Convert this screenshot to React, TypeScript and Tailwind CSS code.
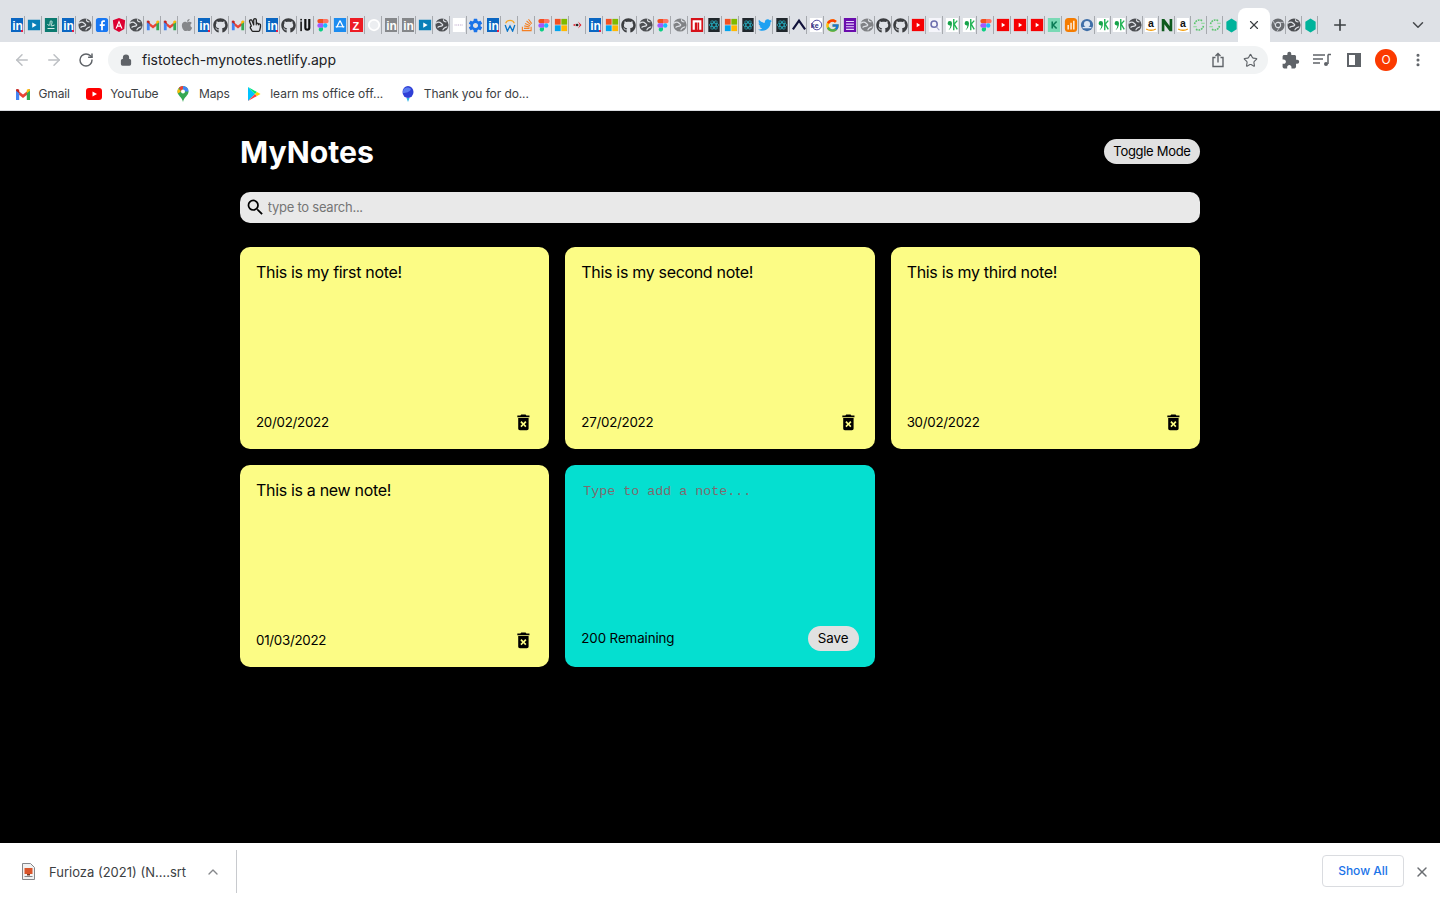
import React from "react";
import { ArrowLeft, ArrowRight, RotateCw, Plus, ChevronDown, ChevronUp, X, Star, Lock, MoreVertical } from "lucide-react";
import { MdDeleteForever, MdSearch, MdSettings, MdExtension } from "react-icons/md";
import { FaApple, FaGithub, FaTwitter, FaStackOverflow, FaRegHandPeace } from "react-icons/fa";
import { FcGoogle } from "react-icons/fc";

// favicons, left to right, as they sit in the tab strip
const narrowTabs = [
  "li", "play", "wave", "li", "globe", "fb", "ng", "globe", "gmail", "gmail", "apple", "li", "gh", "gmail", "peace", "li",
  "gh", "iu", "figma", "appstore", "z", "circle", "liGrey", "liGrey", "play", "globe", "blank", "gear", "li", "work", "so",
  "figma", "ms", "dots", "li", "ms", "gh", "globe", "figma", "globeGrey", "t", "react", "ms", "react", "tw", "react", "caret",
  "ke", "g", "form", "globeGrey", "gh", "gh", "yt", "q", "nine", "nine", "figma", "yt", "yt", "yt", "k", "bars",
];
const narrowerTabs = ["seal", "nine", "nine", "globe", "amazon", "n", "amazon", "ring", "ring", "hex"];
const afterTabs = ["chrome", "globe", "hex"];

const notes = [
  { text: "This is my first note!", date: "20/02/2022" },
  { text: "This is my second note!", date: "27/02/2022" },
  { text: "This is my third note!", date: "30/02/2022" },
  { text: "This is a new note!", date: "01/03/2022" },
];

const Svg = ({ children, w = 14, h = 14 }: { children: React.ReactNode; w?: number; h?: number }) => (
  <svg width={w} height={h} viewBox="0 0 16 16" className="shrink-0">
    {children}
  </svg>
);

const Gmail = ({ size = 14 }: { size?: number }) => (
  <Svg w={size} h={size}>
    <path d="M1 3l7 5.500L15 3v3.500L8 12 1 6.500z" fill="#ea4335" />
    <path d="M1 3.500V14h3.200V6.500z" fill="#4285f4" />
    <path d="M15 3.500V14h-3.200V6.500z" fill="#34a853" />
    <path d="M11.800 3.800v3.400L15 4.800C15 3 13.500 2.300 11.800 3.800z" fill="#fbbc04" />
    <path d="M1 4.800v0L4.200 7.200V3.800C2.500 2.300 1 3 1 4.800z" fill="#c5221f" />
  </Svg>
);

const Youtube = ({ w = 14, h = 14 }: { w?: number; h?: number }) => (
  <Svg w={w} h={h}>
    <rect x="0" y="2" width="16" height="12" rx="3" fill="#ff0000" />
    <path d="M6.500 5.500v5L11 8z" fill="#fff" />
  </Svg>
);

const Figma = () => (
  <Svg>
    <path d="M4 1h4v5H4a2.500 2.500 0 0 1 0-5z" fill="#f24e1e" />
    <path d="M8 1h4a2.500 2.500 0 0 1 0 5H8z" fill="#ff7262" />
    <path d="M4 6h4v5H4a2.500 2.500 0 0 1 0-5z" fill="#a259ff" />
    <circle cx="10.500" cy="8.500" r="2.500" fill="#1abcfe" />
    <path d="M4 11h4v2.500a2.500 2.500 0 1 1-4-2.500z" fill="#0acf83" />
  </Svg>
);

const LinkedIn = ({ grey }: { grey?: boolean }) => (
  <svg width="12" height="14" viewBox="0 0 12 14" className="shrink-0">
    <rect width="12" height="14" fill={grey ? "#85878a" : "#0a66c2"} />
    <text x="1.200" y="12" fontSize="12" fontWeight="700" fill="#fff" fontFamily="Liberation Sans, sans-serif">
      in
    </text>
    {!grey && <rect x="10" y="12" width="2" height="2" fill="#e11d48" />}
  </svg>
);

const Globe = ({ color = "#4d4f53" }: { color?: string }) => (
  <Svg>
    <circle cx="8" cy="8" r="7.500" fill={color} />
    <path d="M1 6c3-2 5-1 6 0s3 2 1 3-4 0-5 2M10 1.500c-1 2 1 3 3 3M9 14c0-2 2-3 5-4" stroke="#dee1e6" strokeWidth="1.400" fill="none" />
  </Svg>
);

const Ms = () => (
  <Svg>
    <rect x="1" y="1" width="6.600" height="6.600" fill="#f25022" />
    <rect x="8.400" y="1" width="6.600" height="6.600" fill="#7fba00" />
    <rect x="1" y="8.400" width="6.600" height="6.600" fill="#00a4ef" />
    <rect x="8.400" y="8.400" width="6.600" height="6.600" fill="#ffb900" />
  </Svg>
);

const ReactIcon = () => (
  <Svg>
    <rect x="1.500" width="13" height="16" fill="#20272c" />
    <g stroke="#25b6c9" strokeWidth="0.800" fill="none">
      <ellipse cx="8" cy="8" rx="5.500" ry="2.200" />
      <ellipse cx="8" cy="8" rx="5.500" ry="2.200" transform="rotate(60 8 8)" />
      <ellipse cx="8" cy="8" rx="5.500" ry="2.200" transform="rotate(120 8 8)" />
    </g>
  </Svg>
);

const Nine = () => (
  <Svg>
    <rect x="1" width="14" height="16" fill="#fff" />
    <path d="M3 6a2.500 2.500 0 1 1 5 0c0 4-2 7-4 8 1.500-2 2-3.500 2.200-5.500A2.500 2.500 0 0 1 3 6z" fill="#16a34a" />
    <path d="M10 1v13M14 3l-3.500 4 3.500 6" stroke="#22b455" strokeWidth="1.600" fill="none" />
  </Svg>
);

const Amazon = () => (
  <Svg>
    <rect x="1" width="14" height="16" fill="#fff" />
    <text x="4.500" y="10.500" fontSize="12" fontWeight="700" fill="#111" fontFamily="Liberation Sans, sans-serif">
      a
    </text>
    <path d="M2.500 12.500c3 2 8 2 11 0" stroke="#f59e0b" strokeWidth="1.500" fill="none" />
  </Svg>
);

const Favicon = ({ kind }: { kind: string }) => {
  switch (kind) {
    case "li":
      return <LinkedIn />;
    case "liGrey":
      return <LinkedIn grey />;
    case "play":
      return (
        <Svg>
          <rect x="1" y="2" width="14" height="12" fill="#0a7fb8" />
          <path d="M6 5v6l5-3z" fill="#fff" />
        </Svg>
      );
    case "wave":
      return (
        <Svg>
          <rect x="1" y="0" width="14" height="16" fill="#0b7a70" />
          <path d="M4 7c2 3 3 1 3-2s3-2 2 1-2 4 3 2M4 12h8" stroke="#dff5ef" strokeWidth="1.100" fill="none" />
        </Svg>
      );
    case "globe":
      return <Globe />;
    case "globeGrey":
      return <Globe color="#808285" />;
    case "fb":
      return (
        <Svg>
          <rect x="1" y="0" width="14" height="16" rx="3" fill="#1877f2" />
          <path d="M9 14V9h2l.4-2H9V5.600c0-.8.3-1.100 1.100-1.100h1.200V2.600H9.600C7.700 2.600 7 3.700 7 5.300V7H5.400v2H7v5z" fill="#fff" />
        </Svg>
      );
    case "ng":
      return (
        <Svg>
          <path d="M8 0l7 2.500-1 10L8 16l-6-3.500-1-10z" fill="#dd0031" />
          <path d="M8 2.500L4 12h1.500l.8-2h3.400l.8 2H12zM6.900 8.500L8 5.700l1.100 2.800z" fill="#fff" />
        </Svg>
      );
    case "gmail":
      return <Gmail />;
    case "apple":
      return <FaApple size={14} color="#85878a" />;
    case "gh":
      return <FaGithub size={15} color="#3b3d40" />;
    case "peace":
      return <FaRegHandPeace size={14} color="#222" />;
    case "iu":
      return (
        <Svg>
          <rect x="1.500" y="4" width="1.800" height="11" fill="#111" />
          <rect x="1.500" y="1" width="1.800" height="1.800" fill="#111" />
          <path d="M6 1v10a3.500 3.500 0 0 0 7 0V1h-2.500v10a1 1 0 0 1-2 0V1z" fill="#111" />
        </Svg>
      );
    case "figma":
      return <Figma />;
    case "appstore":
      return (
        <Svg>
          <rect x="1" width="14" height="16" fill="#1c8cf0" />
          <path d="M8 3l-4 8M8 3l4 8M3 10h10" stroke="#fff" strokeWidth="1.300" />
        </Svg>
      );
    case "z":
      return (
        <svg width="13" height="14" viewBox="0 0 13 14" className="shrink-0">
          <rect width="13" height="14" fill="#ed1c24" />
          <text x="2.500" y="11.500" fontSize="11" fontWeight="700" fill="#fff" fontFamily="Liberation Sans, sans-serif">
            Z
          </text>
        </svg>
      );
    case "circle":
      return (
        <Svg>
          <circle cx="8" cy="8" r="6" fill="#eceef1" stroke="#fff" strokeWidth="2" />
        </Svg>
      );
    case "blank":
      return (
        <Svg>
          <rect x="1" width="14" height="16" fill="#fff" />
          <path d="M3 8h10" stroke="#a78bba" strokeDasharray="1 1" />
        </Svg>
      );
    case "gear":
      return <MdSettings size={17} color="#1a73e8" />;
    case "work":
      return (
        <Svg>
          <path d="M3 6a5.500 5.500 0 0 1 10 0" stroke="#f5a623" strokeWidth="1.300" fill="none" />
          <path d="M2.500 8l2.500 7 3-6 3 6 2.500-7" stroke="#0875c9" strokeWidth="1.500" fill="none" />
        </Svg>
      );
    case "so":
      return <FaStackOverflow size={14} color="#f48024" />;
    case "ms":
      return <Ms />;
    case "dots":
      return (
        <Svg>
          <path d="M2 8l3-1.500v3zM8 4l4 4-4 4 2-4z" fill="#e11d2a" />
          <circle cx="7" cy="8" r="1.500" fill="#222" />
        </Svg>
      );
    case "t":
      return (
        <Svg>
          <rect x="1" width="14" height="16" fill="#d6121a" />
          <path d="M3 2.500h10v11h-2.500V5h-2v8.500H8V5H5.500v8.500H3z" fill="#fff" />
        </Svg>
      );
    case "react":
      return <ReactIcon />;
    case "tw":
      return <FaTwitter size={14} color="#1da1f2" />;
    case "caret":
      return (
        <Svg>
          <path d="M1 13L8 3l7 10" stroke="#11123a" strokeWidth="2.500" fill="none" />
        </Svg>
      );
    case "ke":
      return (
        <Svg>
          <rect x="1" width="14" height="16" fill="#fff" />
          <circle cx="9" cy="8" r="5.500" stroke="#3a3592" fill="none" />
          <text x="2" y="11" fontSize="8" fontWeight="700" fill="#312e81" fontFamily="Liberation Sans, sans-serif">
            ke
          </text>
        </Svg>
      );
    case "g":
      return <FcGoogle size={15} />;
    case "form":
      return (
        <Svg>
          <rect x="1" width="14" height="16" fill="#6a0dad" />
          <path d="M3.500 4h9M3.500 7h9M3.500 10h9M3.500 13h9" stroke="#e9d5ff" strokeWidth="1.200" />
        </Svg>
      );
    case "yt":
      return (
        <Svg>
          <rect x="1" y="1" width="14" height="14" fill="#f60002" />
          <path d="M6.500 5.500v5l4-2.500z" fill="#fff" />
        </Svg>
      );
    case "q":
      return (
        <Svg>
          <rect x="1" width="14" height="16" fill="#f5f5fb" />
          <circle cx="7" cy="7" r="3.500" stroke="#6d6fae" strokeWidth="1.800" fill="none" />
          <path d="M9.500 10l3.500 4" stroke="#9da0c9" strokeWidth="1.300" />
        </Svg>
      );
    case "nine":
      return <Nine />;
    case "k":
      return (
        <Svg>
          <rect x="1" width="14" height="16" fill="#7ad9b5" />
          <path d="M6 4v8M11 4L7 8l4 4" stroke="#0a7a55" strokeWidth="1.800" fill="none" />
        </Svg>
      );
    case "bars":
      return (
        <Svg>
          <rect x="1" width="14" height="16" rx="4" fill="#f57c00" />
          <path d="M4 8v5h1.500V8zM7.300 5.500V13h1.500V5.500zM10.500 3v10H12V3z" fill="#fff" />
        </Svg>
      );
    case "seal":
      return (
        <Svg>
          <circle cx="8" cy="8" r="7" fill="#3f6fa8" />
          <circle cx="8" cy="7" r="3.500" fill="#dbe6f2" />
          <path d="M3 11h10" stroke="#dbe6f2" strokeWidth="1.500" />
        </Svg>
      );
    case "amazon":
      return <Amazon />;
    case "n":
      return (
        <Svg>
          <path d="M2 15V1h3l6 8V1h3v14h-3L5 7v8z" fill="#0e5a1d" />
        </Svg>
      );
    case "ring":
      return (
        <Svg>
          <path d="M3 7a5.500 5.500 0 0 1 9-3.500M13 9a5.500 5.500 0 0 1-9 3.500" fill="none" stroke="#5cc46e" strokeWidth="1.800" strokeDasharray="2 1" />
          <path d="M10.500 6h4M1.500 10h4" stroke="#86d993" strokeWidth="1.200" />
        </Svg>
      );
    case "hex":
      return (
        <Svg w={15} h={15}>
          <path d="M8 .5l5.500 3.500v8L8 15.500 2.500 12V4z" fill="#00b39b" />
        </Svg>
      );
    case "chrome":
      return (
        <Svg>
          <circle cx="8" cy="8" r="7.500" fill="#6a6d71" />
          <path d="M8 5h6.500M5.500 9.500L2.500 3.500M10.500 9.500L7 15" stroke="#dee1e6" strokeWidth="0.800" />
          <circle cx="8" cy="8" r="3" fill="#5f6368" stroke="#dee1e6" strokeWidth="1.200" />
        </Svg>
      );
    default:
      return null;
  }
};

const Tab = ({ kind, wide }: { kind: string; wide?: boolean }) => (
  <div className={`relative flex h-full items-center justify-center ${wide ? "w-[17px]" : "w-[16px]"}`}>
    <Favicon kind={kind} />
    <span className="absolute right-0 top-[8px] h-[18px] w-px bg-[#a6a9ae]" />
  </div>
);

const TabStrip = () => (
  <div className="flex h-[42px] shrink-0 items-end bg-[#dee1e6] pl-[8px]">
    <div className="flex h-[34px] items-stretch">
      {narrowTabs.map((kind, i) => (
        <Tab key={i} kind={kind} wide />
      ))}
      {narrowerTabs.map((kind, i) => (
        <Tab key={i} kind={kind} />
      ))}
      <div className="relative z-10 ml-[-1px] flex w-[32px] items-center justify-center rounded-t-[8px] bg-white">
        <X size={14} strokeWidth={2} className="text-[#3c4043]" />
      </div>
      {afterTabs.map((kind, i) => (
        <Tab key={i} kind={kind} />
      ))}
      <div className="ml-[12px] flex w-[20px] items-center justify-center">
        <Plus size={18} strokeWidth={2.2} className="text-[#3c4043]" />
      </div>
    </div>
    <div className="flex h-[34px] flex-1 items-center justify-end pr-[13px]">
      <ChevronDown size={18} strokeWidth={2} className="text-[#45484c]" />
    </div>
  </div>
);

const ToolButton = ({ children }: { children: React.ReactNode }) => (
  <div className="flex h-[32px] w-[32px] items-center justify-center text-[#5f6368]">{children}</div>
);

const Toolbar = () => (
  <div className="flex h-[36px] shrink-0 items-center bg-white pl-[6px] pr-[6px]">
    <ToolButton>
      <ArrowLeft size={18} strokeWidth={2} className="text-[#bdc0c4]" />
    </ToolButton>
    <ToolButton>
      <ArrowRight size={18} strokeWidth={2} className="text-[#bdc0c4]" />
    </ToolButton>
    <ToolButton>
      <RotateCw size={16} strokeWidth={2.2} />
    </ToolButton>
    <div className="ml-[6px] mr-[6px] flex h-[28px] flex-1 items-center rounded-full bg-[#f1f3f4] pl-[12px] pr-[8px]">
      <Lock size={12} strokeWidth={2.5} className="fill-[#5f6368] text-[#5f6368]" />
      <span className="ml-[10px] mt-[-1px] flex-1 text-[14px] text-[#202124]">fistotech-mynotes.netlify.app</span>
      <div className="flex items-center gap-[12px] text-[#5f6368]">
        <svg width="20" height="20" viewBox="0 0 20 20" fill="none" stroke="currentColor" strokeWidth="1.400">
          <path d="M7.500 7.500H5v9h10v-9h-2.500M10 12.500V3.500M7.500 6L10 3.500 12.500 6" />
        </svg>
        <div className="flex w-[20px] justify-center">
          <Star size={15} strokeWidth={1.8} />
        </div>
      </div>
    </div>
    <ToolButton>
      <MdExtension size={19} />
    </ToolButton>
    <ToolButton>
      <svg width="18" height="14" viewBox="0 0 18 14" fill="none" stroke="#5f6368" strokeWidth="1.500">
        <path d="M0 2h12M0 6h10M0 10h7M15 1.500V11M15 1.500h3" />
        <circle cx="13" cy="11" r="2" fill="#5f6368" stroke="none" />
      </svg>
    </ToolButton>
    <ToolButton>
      <div className="flex h-[14px] w-[14px] justify-end border-2 border-[#5f6368]">
        <div className="h-full w-[4px] bg-[#5f6368]" />
      </div>
    </ToolButton>
    <ToolButton>
      <div className="flex h-[22px] w-[22px] items-center justify-center rounded-full bg-[#fb3a00] text-[12px] text-white">O</div>
    </ToolButton>
    <ToolButton>
      <MoreVertical size={16} strokeWidth={2.6} />
    </ToolButton>
  </div>
);

const Bookmark = ({ icon, label, tracking = "tracking-[-0.15px]" }: { icon: React.ReactNode; label: string; tracking?: string }) => (
  <div className={`flex items-center gap-[8px] text-[12px] text-[#3c4043] ${tracking}`}>
    <div className="flex w-[16px] justify-center">{icon}</div>
    <span>{label}</span>
  </div>
);

const Bookmarks = () => (
  <div className="flex h-[33px] shrink-0 items-center gap-[16.5px] border-b border-[#dadce0] bg-white pb-[1px] pl-[14.5px]">
    <Bookmark icon={<Gmail size={16} />} label="Gmail" />
    <Bookmark icon={<Youtube w={16} h={16} />} label="YouTube" />
    <Bookmark
      icon={
        <Svg w={16} h={16}>
          <path d="M8 0a5.500 5.500 0 0 1 5.500 5.500C13.500 9.500 9 11 8 16 7 11 2.500 9.500 2.500 5.500A5.500 5.500 0 0 1 8 0z" fill="#34a853" />
          <path d="M8 0a5.500 5.500 0 0 1 5.500 5.500L10 5.500 8 3z" fill="#4285f4" />
          <path d="M3.500 2.500L6 5.500 2.800 7.500a5 5 0 0 1 .7-5z" fill="#fbbc04" />
          <path d="M4 1.500A5.500 5.500 0 0 1 8 0v3L6 5.500z" fill="#ea4335" />
          <circle cx="8" cy="5.500" r="2" fill="#fff" />
        </Svg>
      }
      label="Maps"
    />
    <Bookmark
      icon={
        <Svg w={16} h={16}>
          <path d="M2 1l7 7-7 7z" fill="#00c3ff" />
          <path d="M2 1l9 5-2 2z" fill="#00e676" />
          <path d="M2 15l9-5-2-2z" fill="#ff3d47" />
          <path d="M11 6l3.500 2-3.500 2-2-2z" fill="#ffd400" />
        </Svg>
      }
      label="learn ms office off..."
      tracking="tracking-normal"
    />
    <Bookmark
      icon={
        <Svg w={16} h={16}>
          <ellipse cx="8" cy="6" rx="5.500" ry="6" fill="#2f3fd6" />
          <path d="M4 3c2-2 5-2 7 0-1 3-5 4-8 4 0-2 0-3 1-4z" fill="#5b7cf0" />
          <path d="M6.500 12h3L8 16z" fill="#2bb3e6" />
        </Svg>
      }
      label="Thank you for do..."
      tracking="tracking-[-0.1px]"
    />
  </div>
);

const Note = ({ text, date }: { text: string; date: string }) => (
  <div className="flex h-[202px] flex-col justify-between rounded-[10px] bg-[#fcfc85] p-4 text-black">
    <span className="text-[16px] leading-[19px] tracking-[-0.32px]">{text}</span>
    <div className="flex items-center justify-between">
      <small className="text-[13.33px] tracking-[-0.27px]">{date}</small>
      <MdDeleteForever size={20.8} />
    </div>
  </div>
);

const AddNote = () => (
  <div className="flex h-[202px] flex-col justify-between rounded-[10px] bg-[#05dfd0] p-4 text-black">
    <textarea
      rows={8}
      placeholder="Type to add a note..."
      className="h-[140px] resize-none bg-transparent px-[2px] pb-[2px] pt-[3px] text-[13.33px] leading-[15px] outline-none placeholder:text-[#7f6a6e]"
      style={{ fontFamily: '"Liberation Mono", monospace' }}
    />
    <div className="flex items-center justify-between">
      <small className="text-[13.33px] tracking-[-0.1px]">200 Remaining</small>
      <button className="h-[25px] w-[51px] rounded-full bg-[#e1e1e1] text-[13.33px]">Save</button>
    </div>
  </div>
);

const DownloadShelf = () => (
  <div className="flex h-[57px] shrink-0 items-center bg-white">
    <div className="flex h-[43px] w-[237px] items-center border-r border-[#c8cace] pl-[22px] pr-[15px]">
      <svg width="13" height="17" viewBox="0 0 13 17" className="shrink-0">
        <path d="M.5.5h8l4 4v12H.5z" fill="#f1f1f1" stroke="#85878a" />
        <rect x="2.500" y="5" width="8" height="6" fill="#d9552b" />
        <path d="M5 11h3v1.500H5z" fill="#7a3a22" />
        <path d="M2.500 13.500h8" stroke="#85878a" />
      </svg>
      <span className="ml-[14px] mt-[2px] flex-1 text-[13px] text-[#3c4043]">Furioza (2021) (N....srt</span>
      <ChevronUp size={16} strokeWidth={2} className="text-[#85878a]" />
    </div>
    <div className="flex flex-1 items-center justify-end pr-[10px]">
      <button className="mb-[1px] h-[32px] w-[82px] rounded-[4px] border border-[#dadce0] text-[12px] font-medium text-[#1a73e8]">Show All</button>
      <X size={16} strokeWidth={2.2} className="ml-[10px] text-[#6b6e72]" />
    </div>
  </div>
);

export default function App() {
  return (
    <div className="flex h-screen flex-col overflow-hidden bg-black" style={{ fontFamily: "Inter, sans-serif" }}>
      <TabStrip />
      <Toolbar />
      <Bookmarks />
      <main className="flex-1 bg-black">
        <div className="mx-auto max-w-[960px] pt-[20px]">
          <header className="mb-[19px] flex h-[42px] items-center justify-between">
            <h1 className="mt-[1px] text-[30.2px] font-bold text-white">MyNotes</h1>
            <button className="mb-[1px] h-[25px] w-[96px] rounded-full bg-[#e1e1e1] text-[13px] tracking-[-0.3px] text-black">Toggle Mode</button>
          </header>
          <div className="mb-[24px] flex h-[31px] items-center rounded-[10px] bg-[#e9e9e9] pl-[5px]">
            <MdSearch size={20.8} className="shrink-0 text-black" />
            <input
              placeholder="type to search..."
              className="flex-1 bg-transparent px-[2px] text-[13px] tracking-[-0.26px] text-black outline-none placeholder:text-[#757575]"
            />
          </div>
          <div className="grid grid-cols-3 gap-4">
            {notes.map((n) => (
              <Note key={n.date} text={n.text} date={n.date} />
            ))}
            <AddNote />
          </div>
        </div>
      </main>
      <DownloadShelf />
    </div>
  );
}
